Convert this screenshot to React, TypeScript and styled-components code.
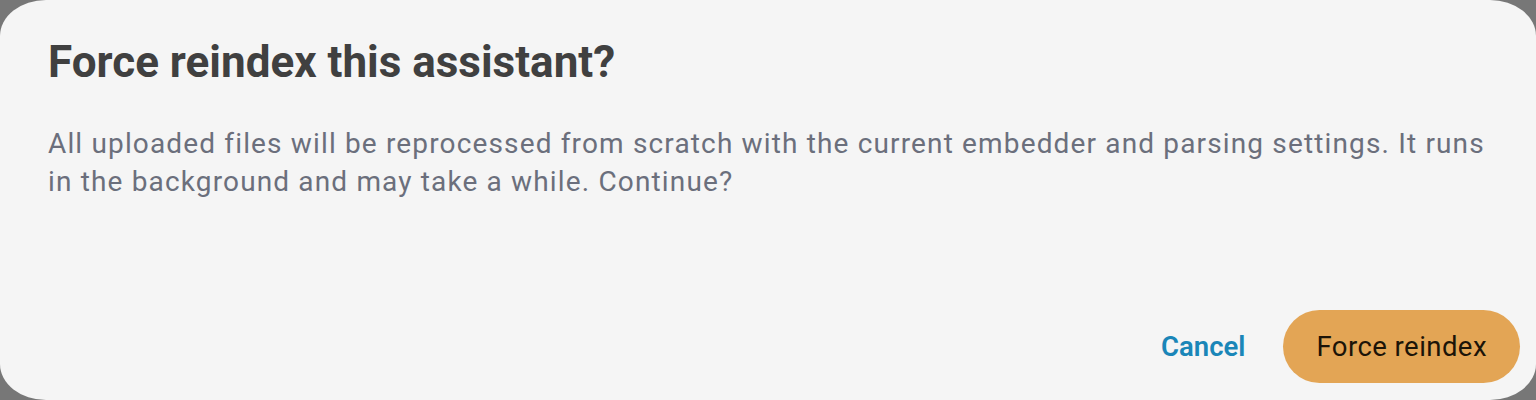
import styled, { createGlobalStyle } from "styled-components";

const GlobalStyle = createGlobalStyle`
  html, body, #root {
    height: 100%;
  }

  body {
    margin: 0;
    background-color: #777777;
    font-family: Roboto, "Noto Sans", sans-serif;
  }
`;

const App = () => {
  return (
    <>
      <GlobalStyle />
      <DialogBox role="dialog" aria-labelledby="reindex-title">
        <Title id="reindex-title">Force reindex this assistant?</Title>
        <Message>
          All uploaded files will be reprocessed from scratch with the current
          embedder and parsing settings. It runs in the background and may take
          a while. Continue?
        </Message>
        <Actions>
          <TextButton type="button">Cancel</TextButton>
          <FilledButton type="button">Force reindex</FilledButton>
        </Actions>
      </DialogBox>
    </>
  );
};

const DialogBox = styled.div`
  display: flex;
  flex-direction: column;
  box-sizing: border-box;
  width: 100%;
  height: 100%;
  border-radius: 46px / 36px;
  background-color: #f5f5f5;
`;

const Title = styled.h2`
  margin: 0;
  padding: 36px 48px 0 48px;
  color: #404040;
  font-size: 44px;
  font-weight: 700;
  line-height: 52.8px;
`;

const Message = styled.p`
  margin: 0;
  padding: 36px 48px 0 48px;
  color: #6b6f7c;
  font-size: 28px;
  font-weight: 400;
  line-height: 37.8px;
  letter-spacing: 1.15px;
`;

const Actions = styled.div`
  display: flex;
  justify-content: flex-end;
  align-items: center;
  gap: 22px;
  margin-top: auto;
  padding: 0 16px 17px 16px;
`;

const TextButton = styled.button`
  height: 73px;
  padding: 0 16px;
  border: none;
  border-radius: 37px;
  background: transparent;
  color: #1a86b8;
  font-family: inherit;
  font-size: 27.5px;
  font-weight: 600;
  cursor: pointer;
`;

const FilledButton = styled.button`
  height: 73px;
  padding: 0 33px;
  border: none;
  border-radius: 37px;
  background-color: #e3a555;
  color: #1c1408;
  font-family: inherit;
  font-size: 27.5px;
  font-weight: 400;
  letter-spacing: 0.45px;
  cursor: pointer;
`;

export default App;
